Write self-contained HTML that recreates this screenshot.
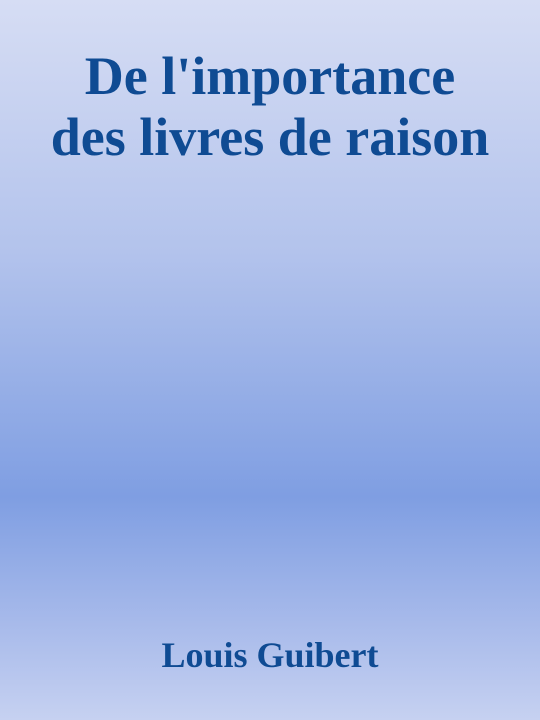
<!DOCTYPE html>
<html><head><meta charset="utf-8"><style>
html,body{margin:0;padding:0}
body{width:540px;height:720px;overflow:hidden;position:relative;
background:linear-gradient(180deg,#d6ddf4 0%,#b3c3ec 35%,#7f9ee2 69%,#a6b9ea 86%,#c6d1f1 100%);
font-family:"Liberation Serif",serif;font-weight:bold;color:#0f4b93;text-align:center}
.t{position:absolute;left:0;width:540px;top:46px;font-size:54px;line-height:61px}
.a{position:absolute;left:0;width:540px;top:635px;font-size:36px;line-height:40px}
</style></head><body>
<div class="t">De l'importance<br>des livres de raison</div>
<div class="a">Louis Guibert</div>
</body></html>
